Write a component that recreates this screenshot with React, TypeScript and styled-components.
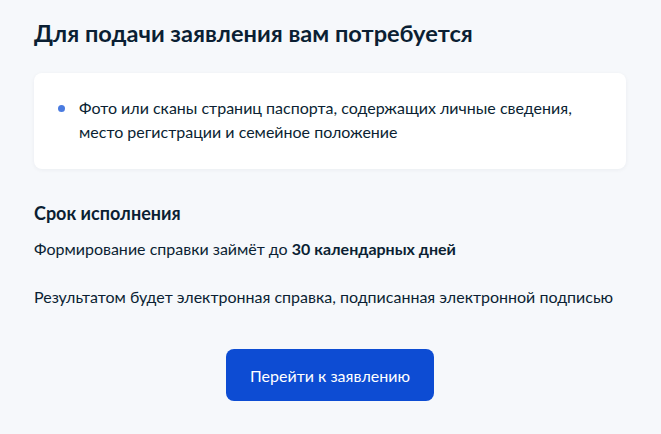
import React from "react";
import styled, { createGlobalStyle } from "styled-components";

const Global = createGlobalStyle`
  html, body {
    margin: 0;
    padding: 0;
    background: #f6f8fb;
  }
  body {
    font-family: Lato, "Noto Sans", sans-serif;
    color: #0b1f33;
  }
`;

const Page = styled.main`
  display: flex;
  flex-direction: column;
  padding: 19px 35px 32px 34px;
  min-height: 434px;
  box-sizing: border-box;
`;

const Title = styled.h2`
  margin: 0;
  font-size: 23.6px;
  line-height: 28px;
  font-weight: 700;
  color: #0b1f33;
`;

const Card = styled.section`
  margin-top: 26px;
  background: #ffffff;
  border-radius: 8px;
  padding: 23px 24px 25px 24px;
  box-shadow: 0 1px 4px rgba(11, 31, 51, 0.05);
`;

const List = styled.ul`
  margin: 0;
  padding: 0;
  list-style: none;
`;

const Item = styled.li`
  display: flex;
  gap: 14px;
  font-size: 16px;
  line-height: 24px;
  color: #0b1f33;
`;

const Dot = styled.span`
  flex: none;
  width: 7px;
  height: 7px;
  border-radius: 50%;
  background: #4a7be0;
  margin-top: 9px;
`;

const Subtitle = styled.h3`
  margin: 32px 0 0;
  font-size: 18px;
  line-height: 24px;
  font-weight: 700;
`;

const Text = styled.p<{ $gap: number }>`
  margin: ${(p) => p.$gap}px 0 0;
  font-size: 16px;
  line-height: 24px;
`;

const Actions = styled.div`
  display: flex;
  justify-content: center;
  margin-top: 40px;
`;

const Button = styled.button`
  width: 208px;
  height: 52px;
  border: none;
  border-radius: 8px;
  background: #0d4cd3;
  color: #ffffff;
  font-family: Lato, "Noto Sans", sans-serif;
  font-size: 16px;
  cursor: pointer;
`;

export default function App() {
  return (
    <>
      <Global />
      <Page>
        <Title>Для подачи заявления вам потребуется</Title>
        <Card>
          <List>
            <Item>
              <Dot />
              <span>
                Фото или сканы страниц паспорта, содержащих личные сведения,
                место регистрации и семейное положение
              </span>
            </Item>
          </List>
        </Card>
        <Subtitle>Срок исполнения</Subtitle>
        <Text $gap={12}>
          Формирование справки займёт до <b>30 календарных дней</b>
        </Text>
        <Text $gap={24}>
          Результатом будет электронная справка, подписанная электронной подписью
        </Text>
        <Actions>
          <Button>Перейти к заявлению</Button>
        </Actions>
      </Page>
    </>
  );
}
